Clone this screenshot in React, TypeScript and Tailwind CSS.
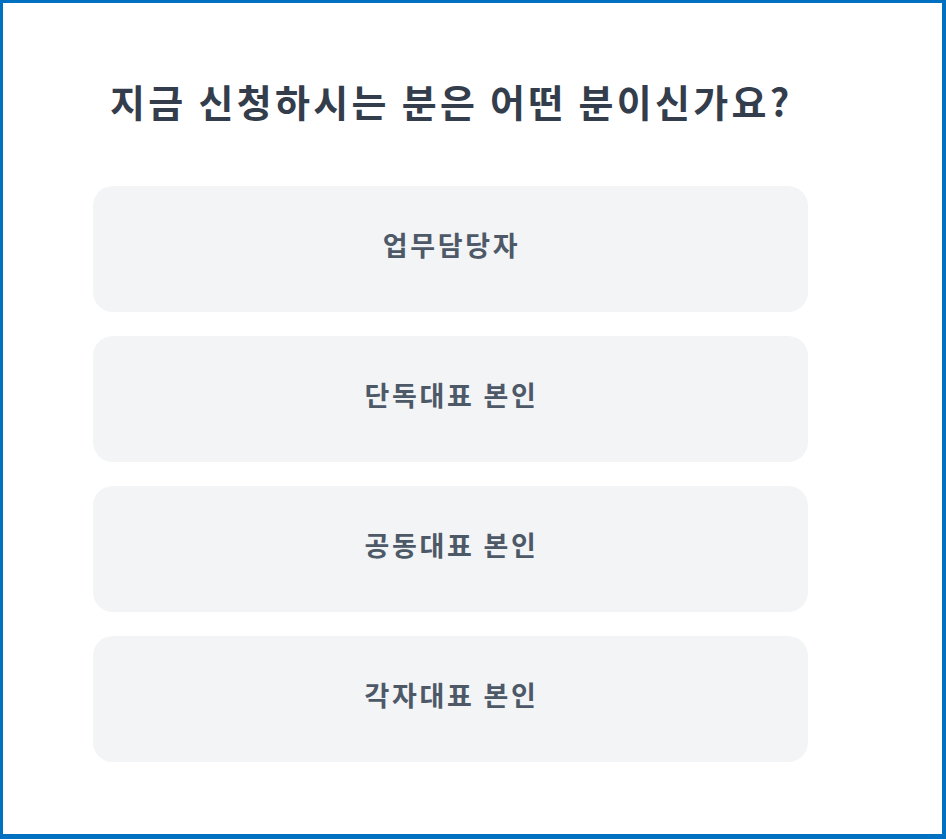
const options = ['업무담당자', '단독대표 본인', '공동대표 본인', '각자대표 본인'];

export default function App() {
  return (
    <div
      className="h-[839px] w-[946px] border-[#0070c0] border-t-[3px] border-l-[3px] border-r-[4px] border-b-[5px] bg-white"
      style={{ fontFamily: '"Noto Sans CJK KR", "Noto Sans", sans-serif' }}
    >
      <div className="ml-[90px] flex w-[715px] flex-col">
        <h1 className="mt-[70px] pl-[17px] text-[38px] font-bold leading-[56px] tracking-[3.3px] text-[#333d4b]">
          지금 신청하시는 분은 어떤 분이신가요?
        </h1>
        <div className="mt-[57px] flex flex-col gap-[24px]">
          {options.map((label) => (
            <button
              key={label}
              type="button"
              className="flex h-[126px] w-full items-center justify-center rounded-[20px] bg-[#f2f4f6] pb-[7px] pl-[2px] text-[27px] font-bold tracking-[2.7px] text-[#4e5968]"
            >
              {label}
            </button>
          ))}
        </div>
      </div>
    </div>
  );
}
